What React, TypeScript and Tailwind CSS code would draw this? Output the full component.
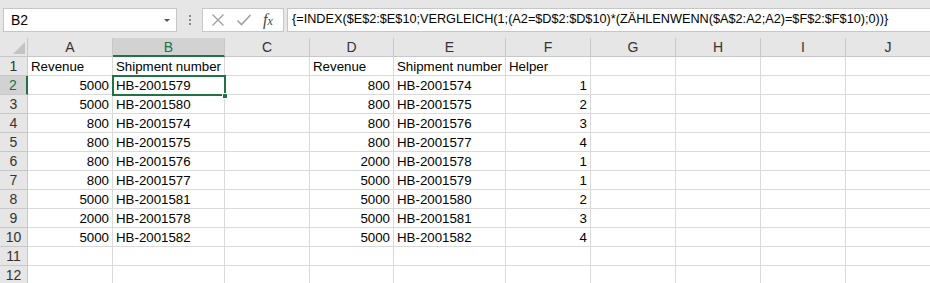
import React from "react";

const cols = ["A", "B", "C", "D", "E", "F", "G", "H", "I", "J"];

type Cell = { t: string; r?: boolean };

const data: Record<number, Record<string, Cell>> = {
  1: { A: { t: "Revenue" }, B: { t: "Shipment number" }, D: { t: "Revenue" }, E: { t: "Shipment number" }, F: { t: "Helper" } },
};
const left: [string, string][] = [
  ["5000", "HB-2001579"],
  ["5000", "HB-2001580"],
  ["800", "HB-2001574"],
  ["800", "HB-2001575"],
  ["800", "HB-2001576"],
  ["800", "HB-2001577"],
  ["5000", "HB-2001581"],
  ["2000", "HB-2001578"],
  ["5000", "HB-2001582"],
];
const right: [string, string, string][] = [
  ["800", "HB-2001574", "1"],
  ["800", "HB-2001575", "2"],
  ["800", "HB-2001576", "3"],
  ["800", "HB-2001577", "4"],
  ["2000", "HB-2001578", "1"],
  ["5000", "HB-2001579", "1"],
  ["5000", "HB-2001580", "2"],
  ["5000", "HB-2001581", "3"],
  ["5000", "HB-2001582", "4"],
];
left.forEach((l, i) => {
  const r = right[i];
  data[i + 2] = {
    A: { t: l[0], r: true },
    B: { t: l[1] },
    D: { t: r[0], r: true },
    E: { t: r[1] },
    F: { t: r[2], r: true },
  };
});

const rows = Array.from({ length: 12 }, (_, i) => i + 1);

export default function App() {
  return (
    <div
      className="w-[930px] h-[283px] overflow-hidden bg-white text-black"
      style={{ fontFamily: '"Liberation Sans", Arial, sans-serif' }}
    >
      {/* formula bar */}
      <div className="h-[38px] bg-[#e6e6e6] flex items-start pt-[8px] pl-[3px]">
        <div className="w-[174px] h-[24px] bg-white border border-[#c6c6c6] flex items-center justify-between pl-[7px] pr-[4px]">
          <span className="text-[14px]">B2</span>
          <svg width="8" height="5" viewBox="0 0 8 5" className="mr-[1px]">
            <path d="M1 1 L4 4 L7 1 Z" fill="#555" />
          </svg>
        </div>
        <div className="w-[25px] h-[24px] flex flex-col items-center justify-center gap-[2px]">
          <span className="w-[2px] h-[2px] bg-[#888]" />
          <span className="w-[2px] h-[2px] bg-[#888]" />
          <span className="w-[2px] h-[2px] bg-[#888]" />
        </div>
        <div className="w-[82px] h-[24px] bg-white border border-[#c6c6c6] flex items-center pl-[8px] gap-[11px]">
          <svg width="14" height="14" viewBox="0 0 14 14">
            <path d="M1.5 1.5 L12.5 12.5 M12.5 1.5 L1.5 12.5" stroke="#a0a0a0" strokeWidth="1.4" />
          </svg>
          <svg width="16" height="14" viewBox="0 0 16 14">
            <path d="M1.5 7.5 L5.5 11.5 L14.5 2" stroke="#a0a0a0" strokeWidth="1.6" fill="none" />
          </svg>
          <span
            className="text-[16px] italic text-[#444] leading-none"
            style={{ fontFamily: '"Liberation Serif", "Times New Roman", serif' }}
          >
            f<span className="text-[12px]">x</span>
          </span>
        </div>
        <div className="ml-[3px] flex-1 h-[24px] bg-white border border-[#c6c6c6] border-r-0 flex items-center pl-[4px]">
          <span className="text-[12.7px] whitespace-nowrap">
            {"{=INDEX($E$2:$E$10;VERGLEICH(1;(A2=$D$2:$D$10)*(ZÄHLENWENN($A$2:A2;A2)=$F$2:$F$10);0))}"}
          </span>
        </div>
      </div>

      {/* grid */}
      <div className="relative">
        <div className="grid grid-cols-[28px_85px_112px_85px_84px_112px_85px_85px_85px_85px_85px] text-[13.3px]">
          {/* header row */}
          <div className="h-[19px] bg-[#e6e6e6] border-r border-b border-[#c8c8c8] relative overflow-hidden">
            <svg width="12" height="12" viewBox="0 0 12 12" className="absolute right-[2px] bottom-[2px]">
              <path d="M12 0 L12 12 L0 12 Z" fill="#c3c3c3" />
            </svg>
          </div>
          {cols.map((c) =>
            c === "B" ? (
              <div
                key={c}
                className="h-[19px] bg-[#d2d2d2] border-r border-[#c8c8c8] border-b-2 border-b-[#217346] flex items-center justify-center text-[#217346] leading-none pt-[1px] text-[14px]"
              >
                {c}
              </div>
            ) : (
              <div
                key={c}
                className="h-[19px] bg-[#e6e6e6] border-r border-b border-[#c8c8c8] flex items-center justify-center text-[#333] leading-none text-[14px]"
              >
                {c}
              </div>
            )
          )}
          {rows.map((r) => (
            <React.Fragment key={r}>
              {r === 2 ? (
                <div className="h-[19px] bg-[#d2d2d2] border-b border-[#c8c8c8] border-r-2 border-r-[#217346] flex items-center justify-center text-[#217346] leading-none text-[14px]">
                  {r}
                </div>
              ) : (
                <div className="h-[19px] bg-[#e6e6e6] border-r border-b border-[#c8c8c8] flex items-center justify-center text-[#333] leading-none text-[14px]">
                  {r}
                </div>
              )}
              {cols.map((c) => {
                const cell = data[r]?.[c];
                return (
                  <div
                    key={c}
                    className={`h-[19px] border-r border-b border-[#dadada] flex items-center pt-[1px] px-[3px] whitespace-nowrap leading-none ${
                      cell?.r ? "justify-end" : "justify-start"
                    }`}
                  >
                    {cell?.t ?? ""}
                  </div>
                );
              })}
            </React.Fragment>
          ))}
        </div>
        {/* selection */}
        <div className="absolute left-[112px] top-[37px] w-[114px] h-[21px] border-2 border-[#217346] pointer-events-none" />
        <div className="absolute left-[222px] top-[55px] w-[6px] h-[6px] bg-[#217346] border border-white pointer-events-none" />
      </div>
    </div>
  );
}
